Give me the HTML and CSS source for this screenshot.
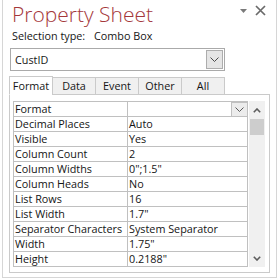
FILE: index.html
```html
<!DOCTYPE html>
<html lang="en">
<head>
    <meta charset="UTF-8">
    <meta name="viewport" content="width=device-width, initial-scale=1.0">
    <title>Property Sheet</title>
    <link rel="stylesheet" href="styles.css">
</head>
<body>
    <div class="pane">
        <div class="pane-header">
            <h1 class="pane-title">Property Sheet</h1>
            <div class="pane-controls">
                <svg class="pane-menu" width="7" height="4" viewBox="0 0 7 4"><path d="M0 0h7L3.5 4z" fill="#7a7a7a"/></svg>
                <svg class="pane-close" width="11" height="11" viewBox="0 0 11 11"><path d="M1 1l9 9M10 1l-9 9" stroke="#6a6a6a" stroke-width="1.7"/></svg>
            </div>
        </div>

        <div class="selection">
            <span>Selection type:</span>
            <span class="selection-type">Combo Box</span>
        </div>

        <div class="combo">
            <span class="combo-value">CustID</span>
            <span class="combo-btn">
                <svg width="9" height="5" viewBox="0 0 9 5"><path d="M0.5 0.5l4 4 4-4" fill="none" stroke="#4a4a4a" stroke-width="1"/></svg>
            </span>
        </div>

        <div class="tabs">
            <div class="tab active">Format</div>
            <div class="tab">Data</div>
            <div class="tab">Event</div>
            <div class="tab">Other</div>
            <div class="tab">All</div>
        </div>

        <div class="tab-panel">
            <div class="props">
                <div class="prop">
                    <div class="prop-name">Format</div>
                    <div class="prop-value prop-select">
                        <span class="prop-drop">
                            <svg width="9" height="5" viewBox="0 0 9 5"><path d="M0.5 0.5l4 4 4-4" fill="none" stroke="#5a5a5a" stroke-width="1"/></svg>
                        </span>
                    </div>
                </div>
                <div class="prop"><div class="prop-name">Decimal Places</div><div class="prop-value">Auto</div></div>
                <div class="prop"><div class="prop-name">Visible</div><div class="prop-value">Yes</div></div>
                <div class="prop"><div class="prop-name">Column Count</div><div class="prop-value">2</div></div>
                <div class="prop"><div class="prop-name">Column Widths</div><div class="prop-value">0";1.5"</div></div>
                <div class="prop"><div class="prop-name">Column Heads</div><div class="prop-value">No</div></div>
                <div class="prop"><div class="prop-name">List Rows</div><div class="prop-value">16</div></div>
                <div class="prop"><div class="prop-name">List Width</div><div class="prop-value">1.7"</div></div>
                <div class="prop"><div class="prop-name">Separator Characters</div><div class="prop-value">System Separator</div></div>
                <div class="prop"><div class="prop-name">Width</div><div class="prop-value">1.75"</div></div>
                <div class="prop"><div class="prop-name">Height</div><div class="prop-value">0.2188"</div></div>
            </div>

            <div class="scrollbar">
                <div class="scroll-arrow">
                    <svg width="8" height="5" viewBox="0 0 8 5"><path d="M0.8 4.2L4 1l3.2 3.2" fill="none" stroke="#5c5c5c" stroke-width="1.6"/></svg>
                </div>
                <div class="scroll-thumb"></div>
                <div class="scroll-track"></div>
                <div class="scroll-arrow">
                    <svg width="8" height="5" viewBox="0 0 8 5"><path d="M0.8 0.8L4 4l3.2-3.2" fill="none" stroke="#5c5c5c" stroke-width="1.6"/></svg>
                </div>
            </div>
        </div>
    </div>
</body>
</html>
```

FILE: styles.css
```css
body {
    margin: 0;
    font-family: "Open Sans", "Noto Sans", sans-serif;
    font-size: 10.8px;
    color: #151515;
    background: #fff;
}

.pane {
    margin-left: 2px;
    width: 275px;
    height: 278px;
    box-sizing: border-box;
    border: 1px solid #d6d6d6;
    border-top: none;
    padding: 0 6px;
    display: flex;
    flex-direction: column;
}

.pane-header {
    display: flex;
    justify-content: space-between;
    height: 28px;
}

.pane-title {
    margin: 0;
    padding-left: 3px;
    font-size: 21px;
    font-weight: 300;
    line-height: 28px;
    color: #a4373a;
}

.pane-controls {
    display: flex;
    align-items: flex-start;
    gap: 8px;
    padding-top: 5px;
    padding-right: 4px;
}

.pane-menu {
    margin-top: 4px;
}

.selection {
    height: 15px;
    line-height: 15px;
    padding-left: 3px;
}

.selection-type {
    margin-left: 6px;
}

.combo {
    margin: 5px 0 0 1px;
    width: 215px;
    height: 23px;
    box-sizing: border-box;
    border: 1px solid #aaaaaa;
    display: flex;
    align-items: center;
    justify-content: space-between;
    padding: 1px;
}

.combo-value {
    padding-left: 3px;
}

.combo-btn {
    width: 17px;
    height: 19px;
    box-sizing: border-box;
    border: 1px solid #adadad;
    background: #e5e5e5;
    display: flex;
    align-items: center;
    justify-content: center;
}

.tabs {
    display: flex;
    align-items: flex-end;
    height: 19px;
    margin-top: 5px;
    margin-bottom: -1px;
    position: relative;
    z-index: 1;
}

.tab {
    width: 44px;
    height: 18px;
    box-sizing: border-box;
    margin-right: -1px;
    border: 1px solid #cacaca;
    background: #f0f0f0;
    text-align: center;
    line-height: 16px;
}

.tab.active {
    height: 19px;
    background: #fff;
    border-bottom-color: #fff;
    line-height: 18px;
}

.tab-panel {
    flex: 1;
    margin-bottom: 4px;
    border: 1px solid #cacaca;
    padding: 6px 3px 0 3px;
    display: flex;
    align-items: flex-start;
    gap: 1px;
}

.props {
    width: 235px;
    box-sizing: border-box;
    border: 1px solid #c0c0c0;
    border-bottom: none;
}

.prop {
    display: grid;
    grid-template-columns: 114px 1fr;
    height: 15px;
    box-sizing: border-box;
    border-bottom: 1px solid #c0c0c0;
    line-height: 14px;
    white-space: nowrap;
}

.prop-name {
    padding-left: 1px;
    border-right: 1px solid #c0c0c0;
}

.prop-value {
    padding-left: 1px;
}

.prop-select {
    display: flex;
    justify-content: flex-end;
}

.prop-drop {
    width: 16px;
    height: 15px;
    box-sizing: border-box;
    border: 1px solid #c0c0c0;
    border-right: none;
    background: #ececec;
    display: flex;
    align-items: center;
    justify-content: center;
}

.scrollbar {
    width: 16px;
    height: 166px;
    background: #f0f0f0;
    display: flex;
    flex-direction: column;
}

.scroll-arrow {
    height: 18px;
    display: flex;
    align-items: center;
    justify-content: center;
}

.scroll-thumb {
    height: 16px;
    margin: 0 1px;
    background: #cdcdcd;
}

.scroll-track {
    flex: 1;
}
```
